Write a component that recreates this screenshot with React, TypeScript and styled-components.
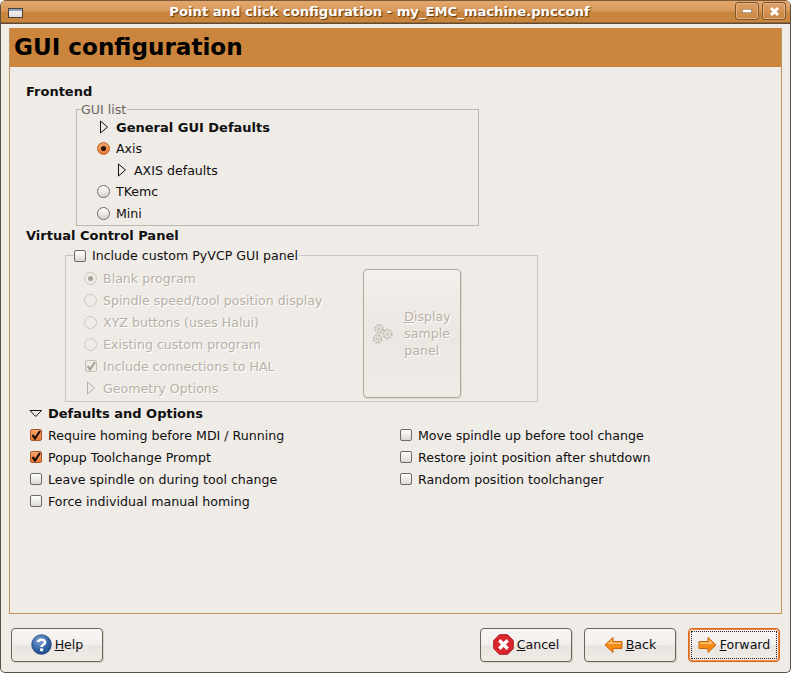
import React from "react";
import styled, { createGlobalStyle } from "styled-components";

const GlobalStyle = createGlobalStyle`
  html, body {
    margin: 0;
    padding: 0;
    background: #fff;
  }
  body {
    font-family: "DejaVu Sans", "Liberation Sans", sans-serif;
    font-size: 12.6px;
    color: #101010;
  }
`;

const Window = styled.div`
  width: 791px;
  height: 673px;
  box-sizing: border-box;
  display: flex;
  flex-direction: column;
  background: #efebe7;
  border: 1px solid #5c5043;
  border-top: 0;
  border-radius: 6px 6px 5px 5px;
  overflow: hidden;
`;

const TitleBar = styled.div`
  height: 24px;
  flex: none;
  box-sizing: border-box;
  display: flex;
  align-items: center;
  padding: 0 4px 2px 7px;
  background: linear-gradient(#7a5a38 0, #7a5a38 1px, #e3a76c 1px, #d9995a 11px, #c9843e 12px, #c9843e 22px, #5f4a33 23px);
  box-shadow: inset 0 -1px 0 #5f4a33;
`;

const TitleText = styled.div`
  flex: 1;
  text-align: center;
  color: #fff;
  font-weight: bold;
  font-size: 13.15px;
  padding-left: 4px;
  text-shadow: 1px 1px 1px #5a3a14;
  white-space: nowrap;
`;

const MenuIcon = styled.div`
  width: 13px;
  height: 8px;
  margin-top: 3px;
  border: 1px solid #4d4033;
  background: linear-gradient(#8fa3c4 0, #8fa3c4 2px, #f2f2f2 2px, #dcdcdc);
`;

const WinButton = styled.div`
  width: 22px;
  height: 16px;
  margin-left: 3px;
  display: flex;
  align-items: center;
  justify-content: center;
  border: 1px solid #7d5730;
  border-radius: 3px;
  box-shadow: inset 0 0 0 1px #e3b080;
  background: linear-gradient(#dca068, #c98541);
`;

const Frame = styled.div`
  margin: 4px 8px 0 8px;
  height: 586px;
  flex: none;
  box-sizing: border-box;
  border: 1px solid #c09560;
  border-top: 0;
  display: flex;
  flex-direction: column;
`;

const Banner = styled.div`
  height: 39px;
  flex: none;
  background: #cb853c;
  color: #000;
  font-size: 23.1px;
  font-weight: bold;
  line-height: 39px;
  padding-left: 4px;
  white-space: nowrap;
`;

const Body = styled.div`
  flex: 1;
  padding: 17px 16px 0 16px;
`;

const SectionLabel = styled.div<{ $top?: number }>`
  font-size: 13px;
  font-weight: bold;
  line-height: 15px;
  height: 15px;
  margin-top: ${(p) => p.$top ?? 0}px;
`;

const GuiListBox = styled.div`
  position: relative;
  box-sizing: border-box;
  width: 403px;
  height: 117px;
  margin: 10px 0 0 50px;
  padding: 6.5px 0 0 20px;
  border: 1px solid #bdb8b1;
`;

const PanelBox = styled.div`
  position: relative;
  box-sizing: border-box;
  width: 473px;
  height: 147px;
  margin: 12px 0 0 39px;
  padding: 11px 0 0 18px;
  border: 1px solid #c9c5bf;
  display: flex;
`;

const Legend = styled.div<{ $left: number }>`
  position: absolute;
  top: -8px;
  left: ${(p) => p.$left}px;
  padding: 0 1px 0 0;
  background: #efebe7;
  line-height: 15px;
  display: flex;
  align-items: center;
  gap: 6px;
  color: ${(p) => (p.$left < 6 ? "#6b6660" : "#101010")};
`;

const Row = styled.div<{ $h?: number; $disabled?: boolean; $bold?: boolean; $indent?: number }>`
  height: ${(p) => p.$h ?? 22}px;
  display: flex;
  align-items: center;
  gap: 6px;
  padding-left: ${(p) => p.$indent ?? 0}px;
  white-space: nowrap;
  font-size: ${(p) => (p.$bold ? "13px" : "12.6px")};
  font-weight: ${(p) => (p.$bold ? "bold" : "normal")};
  color: ${(p) => (p.$disabled ? "#b8b0a6" : "#101010")};
  text-shadow: ${(p) => (p.$disabled ? "1px 1px 0 #fff" : "none")};
`;

const Radio = styled.span<{ $on?: boolean; $disabled?: boolean }>`
  width: 13px;
  height: 13px;
  flex: none;
  box-sizing: border-box;
  border-radius: 50%;
  display: flex;
  align-items: center;
  justify-content: center;
  border: 1px solid ${(p) => (p.$disabled ? "#cdc8c1" : p.$on ? "#b9602a" : "#6f6a63")};
  background: ${(p) =>
    p.$disabled
      ? "#efebe7"
      : p.$on
      ? "linear-gradient(#f8a56d, #ea7a37)"
      : "linear-gradient(#fff, #d8d5d0)"};
  &::after {
    content: "";
    display: ${(p) => (p.$on ? "block" : "none")};
    width: 5px;
    height: 5px;
    border-radius: 50%;
    background: ${(p) => (p.$disabled ? "#a8a197" : "#2a1608")};
  }
`;

const CheckBox = styled.span<{ $on?: boolean; $disabled?: boolean }>`
  width: 12px;
  height: 12px;
  flex: none;
  box-sizing: border-box;
  margin-left: ${(p) => (p.$disabled ? 1 : 0)}px;
  border-radius: 2px;
  display: flex;
  align-items: center;
  justify-content: center;
  border: 1px solid ${(p) => (p.$disabled ? "#c4bfb7" : p.$on ? "#a9582a" : "#6f6a63")};
  background: ${(p) =>
    p.$disabled
      ? "#efebe7"
      : p.$on
      ? "linear-gradient(#f8a56d, #ea7a37)"
      : "linear-gradient(#fff, #dcd9d4)"};
`;

const TriangleBox = styled.svg`
  flex: none;
  display: block;
`;

const LeftColumn = styled.div`
  width: 279px;
  flex: none;
`;

const SampleButton = styled.div`
  width: 98px;
  height: 129px;
  margin-top: 2px;
  box-sizing: border-box;
  display: flex;
  align-items: center;
  justify-content: center;
  gap: 10px;
  padding-right: 1px;
  border: 1px solid #b0a899;
  border-radius: 4px;
  background: linear-gradient(#f3f0ed, #ebe7e2 50%, #efebe7);
  box-shadow: 1px 1px 0 #dbd6cf;
  color: #b8b0a6;
  line-height: 17px;
  text-shadow: 1px 1px 0 #fff;
`;

const OptionGrid = styled.div`
  display: grid;
  grid-template-columns: 370px 1fr;
  grid-auto-flow: column;
  grid-template-rows: repeat(4, 22px);
  padding-left: 4px;
`;

const ButtonBar = styled.div`
  flex: 1;
  display: flex;
  align-items: flex-start;
  gap: 12px;
  padding: 14px 9px 0 9px;
  margin: 0 1px;
`;

const Spacer = styled.div`
  flex: 1;
`;

const ActionButton = styled.div<{ $focus?: boolean }>`
  position: relative;
  width: 92px;
  height: 34px;
  box-sizing: border-box;
  display: flex;
  align-items: center;
  justify-content: center;
  gap: 3px;
  padding-bottom: 1px;
  border: 1px solid ${(p) => (p.$focus ? "#d9661e" : "#6e6558")};
  border-radius: 4px;
  background: linear-gradient(#f8f6f4, #f2efec 50%, #e8e4df 52%, #efebe7);
  box-shadow: ${(p) => (p.$focus ? "inset 0 0 0 1px #f08a45" : "1px 1px 0 #d5d0c9")};
  &::after {
    content: "";
    display: ${(p) => (p.$focus ? "block" : "none")};
    position: absolute;
    inset: 2px;
    border: 1px dotted #222;
  }
`;

const Triangle = ({ dir = "right", muted }: { dir?: "right" | "down"; muted?: boolean }) =>
  dir === "right" ? (
    <TriangleBox width="13" height="14" viewBox="0 0 13 14">
      <path d="M3.5 1 L10.5 7 L3.5 13 Z" fill="none" stroke={muted ? "#b8b0a6" : "#111"} strokeWidth="1" />
    </TriangleBox>
  ) : (
    <TriangleBox width="14" height="10" viewBox="0 0 14 10">
      <path d="M2 2.5 H13.5 L7.75 8.5 Z" fill="none" stroke="#111" strokeWidth="1" />
    </TriangleBox>
  );

const Tick = ({ color = "#1c0f06" }: { color?: string }) => (
  <svg width="10" height="10" viewBox="0 0 10 10">
    <path d="M1.5 5 L4 8.5 L9 1" fill="none" stroke={color} strokeWidth="2.2" />
  </svg>
);

const HelpIcon = () => (
  <svg width="21" height="21" viewBox="0 0 21 21">
    <defs>
      <radialGradient id="helpBlue" cx="0.4" cy="0.3" r="0.8">
        <stop offset="0" stopColor="#7fa4d4" />
        <stop offset="0.6" stopColor="#2f62a6" />
        <stop offset="1" stopColor="#1d4078" />
      </radialGradient>
    </defs>
    <circle cx="10.5" cy="10.5" r="9.8" fill="url(#helpBlue)" stroke="#27487c" strokeWidth="0.8" />
    <path d="M7 8 C7 5 14 5 14 8.4 C14 10.6 10.6 10.4 10.6 13" fill="none" stroke="#fff" strokeWidth="2.6" />
    <rect x="9.1" y="14.4" width="3" height="2.8" fill="#fff" />
  </svg>
);

const CancelIcon = () => (
  <svg width="21" height="21" viewBox="0 0 21 21">
    <path d="M6.5 0.7 H14.5 L20.3 6.5 V14.5 L14.5 20.3 H6.5 L0.7 14.5 V6.5 Z" fill="#d8262c" stroke="#b01c20" />
    <path d="M6.3 6.3 L14.7 14.7 M14.7 6.3 L6.3 14.7" stroke="#fff" strokeWidth="3.4" />
  </svg>
);

const ArrowIcon = ({ flip }: { flip?: boolean }) => (
  <svg width="19" height="18" viewBox="0 0 19 18" style={flip ? { transform: "scaleX(-1)" } : undefined}>
    <path d="M1 5.5 H10 V1.5 L18 9 L10 16.5 V12.5 H1 Z" fill="#f58a14" stroke="#c9690e" strokeWidth="1" />
    <path d="M2 6.5 H11 V4 L15.5 8 H2 Z" fill="#fbc47f" />
  </svg>
);

const GearsIcon = () => (
  <svg width="22" height="22" viewBox="0 0 22 22" fill="none" stroke="#c2bcb3">
    <circle cx="7" cy="6" r="3.8" strokeWidth="2" strokeDasharray="2 1" />
    <circle cx="7" cy="6" r="1.2" />
    <circle cx="15.5" cy="11" r="4.2" strokeWidth="2" strokeDasharray="2 1" />
    <circle cx="15.5" cy="11" r="1.4" />
    <circle cx="5.5" cy="16" r="3.8" strokeWidth="2" strokeDasharray="2 1" />
    <circle cx="5.5" cy="16" r="1.2" />
  </svg>
);

const Label = ({ mark, children }: { mark: string; children: string }) => (
  <span>
    <u>{mark}</u>
    {children}
  </span>
);

const leftOptions = [
  { text: "Require homing before MDI / Running", on: true },
  { text: "Popup Toolchange Prompt", on: true },
  { text: "Leave spindle on during tool change" },
  { text: "Force individual manual homing" },
];

const rightOptions = [
  { text: "Move spindle up before tool change" },
  { text: "Restore joint position after shutdown" },
  { text: "Random position toolchanger" },
];

export default function App() {
  return (
    <Window>
      <GlobalStyle />
      <TitleBar>
        <MenuIcon />
        <TitleText>Point and click configuration - my_EMC_machine.pncconf</TitleText>
        <WinButton>
          <svg width="10" height="4" viewBox="0 0 10 4">
            <rect width="10" height="4" fill="#fff" stroke="#6b4a26" strokeWidth="1" />
          </svg>
        </WinButton>
        <WinButton>
          <svg width="11" height="11" viewBox="0 0 11 11">
            <path d="M2 2 L9 9 M9 2 L2 9" stroke="#fff" strokeWidth="3" />
          </svg>
        </WinButton>
      </TitleBar>
      <Frame>
        <Banner>GUI configuration</Banner>
        <Body>
          <SectionLabel>Frontend</SectionLabel>
          <GuiListBox>
            <Legend $left={4}>GUI list</Legend>
            <Row $h={21.5} $bold>
              <Triangle />
              General GUI Defaults
            </Row>
            <Row $h={21.5}>
              <Radio $on />
              Axis
            </Row>
            <Row $h={21.5} $indent={18}>
              <Triangle />
              AXIS defaults
            </Row>
            <Row $h={21.5}>
              <Radio />
              TKemc
            </Row>
            <Row $h={21.5}>
              <Radio />
              Mini
            </Row>
          </GuiListBox>
          <SectionLabel $top={2}>Virtual Control Panel</SectionLabel>
          <PanelBox>
            <Legend $left={8}>
              <CheckBox />
              Include custom PyVCP GUI panel
            </Legend>
            <LeftColumn>
              <Row $disabled>
                <Radio $on $disabled />
                Blank program
              </Row>
              <Row $disabled>
                <Radio $disabled />
                Spindle speed/tool position display
              </Row>
              <Row $disabled>
                <Radio $disabled />
                XYZ buttons (uses Halui)
              </Row>
              <Row $disabled>
                <Radio $disabled />
                Existing custom program
              </Row>
              <Row $disabled>
                <CheckBox $on $disabled>
                  <Tick color="#aaa297" />
                </CheckBox>
                Include connections to HAL
              </Row>
              <Row $disabled>
                <Triangle muted />
                Geometry Options
              </Row>
            </LeftColumn>
            <SampleButton>
              <GearsIcon />
              <span>
                <Label mark="D">isplay</Label>
                <br />
                sample
                <br />
                panel
              </span>
            </SampleButton>
          </PanelBox>
          <Row $bold $h={22} $indent={2}>
            <Triangle dir="down" />
            Defaults and Options
          </Row>
          <OptionGrid>
            {leftOptions.map((o) => (
              <Row key={o.text}>
                <CheckBox $on={o.on}>{o.on && <Tick />}</CheckBox>
                {o.text}
              </Row>
            ))}
            {rightOptions.map((o) => (
              <Row key={o.text}>
                <CheckBox />
                {o.text}
              </Row>
            ))}
          </OptionGrid>
        </Body>
      </Frame>
      <ButtonBar>
        <ActionButton>
          <HelpIcon />
          <Label mark="H">elp</Label>
        </ActionButton>
        <Spacer />
        <ActionButton>
          <CancelIcon />
          <Label mark="C">ancel</Label>
        </ActionButton>
        <ActionButton>
          <ArrowIcon flip />
          <Label mark="B">ack</Label>
        </ActionButton>
        <ActionButton $focus>
          <ArrowIcon />
          <Label mark="F">orward</Label>
        </ActionButton>
      </ButtonBar>
    </Window>
  );
}
